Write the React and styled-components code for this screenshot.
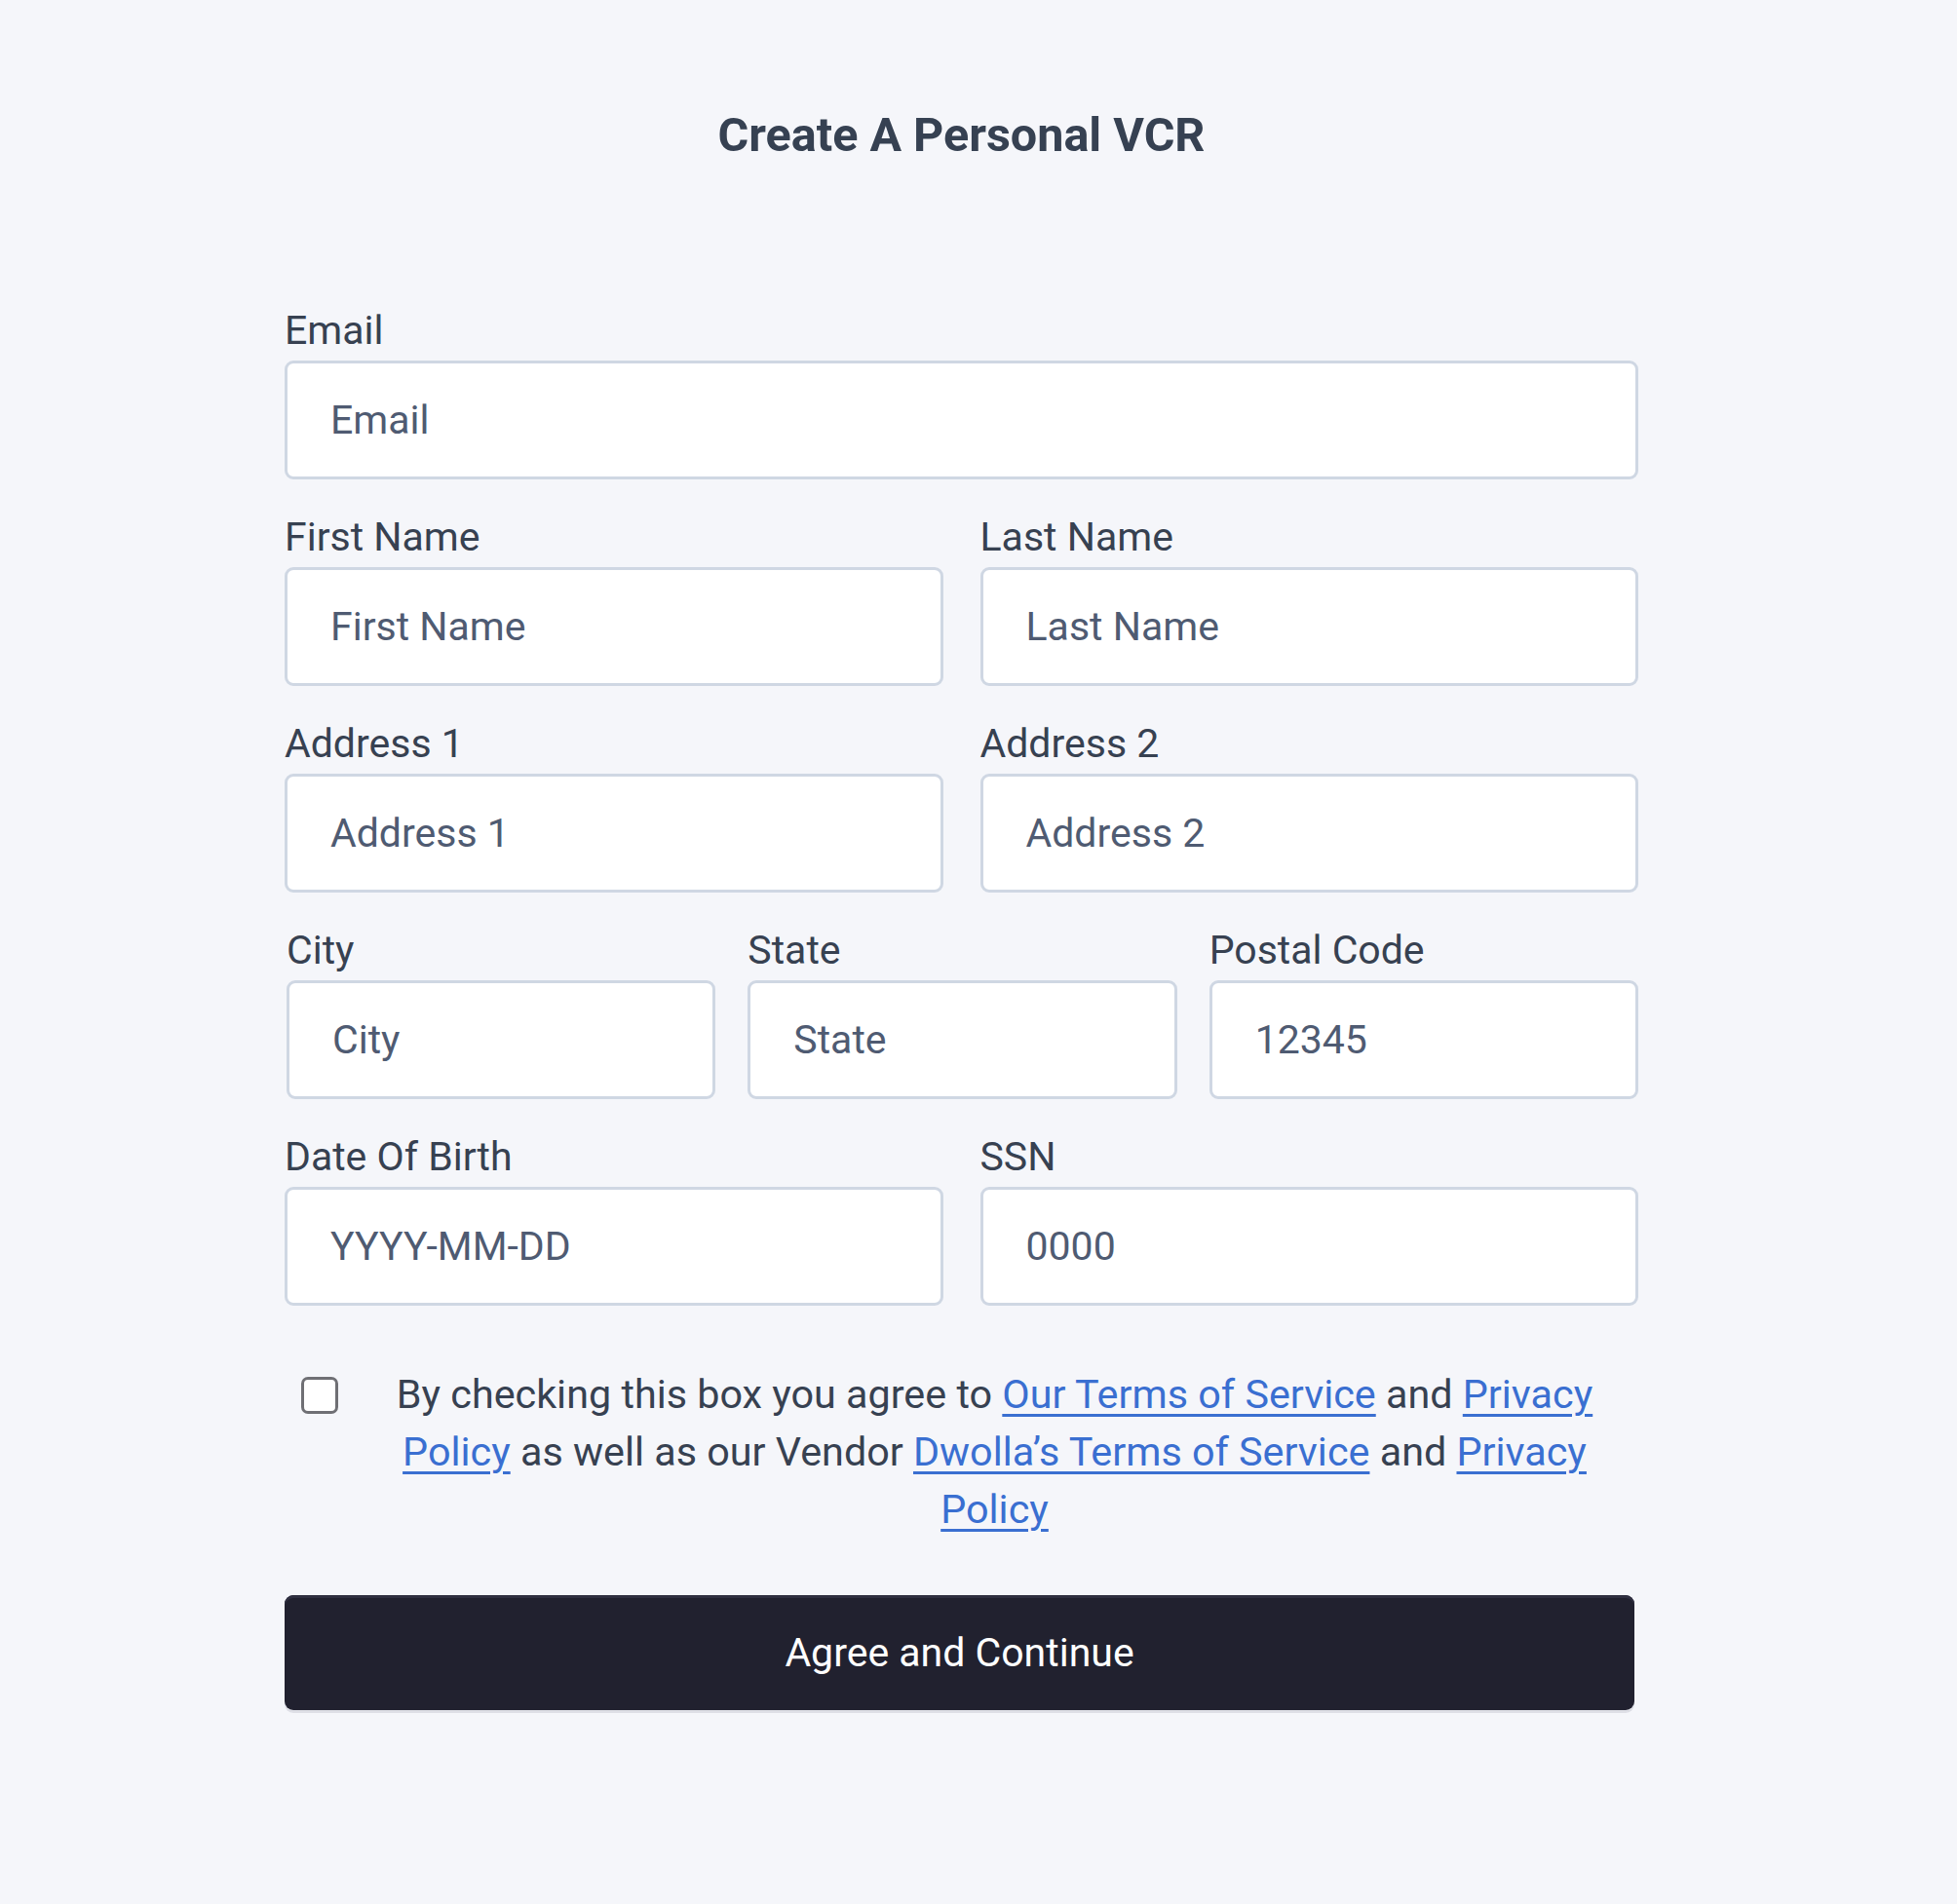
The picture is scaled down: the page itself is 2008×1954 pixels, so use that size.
import React from 'react'
import styled, { createGlobalStyle } from 'styled-components'

const GlobalStyle = createGlobalStyle`
    html, body {
        margin: 0;
        padding: 0;
        background: #f5f6fa;
    }

    body {
        font-family: Roboto, "Liberation Sans", Arial, sans-serif;
        color: #374151;
    }
`

const Page = styled.div`
    min-height: 1954px;
    padding: 0 35px 0 0;
    box-sizing: border-box;
    display: flex;
    flex-direction: column;
    align-items: center;
`

const Title = styled.h1`
    margin: 111px 0 0;
    font-size: 48.5px;
    line-height: 56px;
    font-weight: 700;
    color: #364152;
`

const Form = styled.form`
    width: 1389px;
    margin-top: 147px;
    display: flex;
    flex-direction: column;
`

const Row = styled.div`
    display: grid;
    grid-template-columns: repeat(${props => props.cols || 1}, 1fr);
    column-gap: ${props => props.gap || 38}px;
    padding-left: ${props => props.inset || 0}px;
`

const Field = styled.div`
    display: flex;
    flex-direction: column;
    margin-bottom: 34px;
`

const Label = styled.label`
    font-size: 41px;
    line-height: 50px;
    color: #374151;
    margin-bottom: 6px;
`

const Input = styled.input`
    box-sizing: border-box;
    height: 122px;
    width: 100%;
    padding: 0 44px;
    border: 3px solid #cfd7e3;
    border-radius: 9px;
    background: #fff;
    font-family: inherit;
    font-size: 41px;
    color: #2d3748;
    outline: none;

    &::placeholder {
        color: #4f5b72;
        opacity: 1;
    }
`

const Agreement = styled.div`
    display: flex;
    align-items: flex-start;
    margin-top: 28px;
`

const Box = styled.input`
    appearance: none;
    flex: 0 0 auto;
    width: 38px;
    height: 38px;
    margin: 11px 0 0 17px;
    border: 3px solid #6f6f74;
    border-radius: 7px;
    background: #fff;
    box-sizing: border-box;
`

const Terms = styled.p`
    margin: 0 38px 0 51px;
    flex: 1;
    text-align: center;
    font-size: 41.3px;
    line-height: 59px;
    color: #374151;
`

const TermsLink = styled.a`
    color: #3a6fd1;
    text-decoration: underline;
    text-underline-offset: 6px;
    text-decoration-thickness: 3px;
`

const Button = styled.button`
    margin-top: 58px;
    width: 1385px;
    height: 118px;
    border: none;
    border-radius: 9px;
    background: #21212f;
    box-shadow: inset 0 3px 0 #2f2f40, 0 3px 0 #dedfe6;
    color: #fff;
    font-family: inherit;
    font-size: 41px;
    cursor: pointer;
`

const TextField = ({ label, placeholder }) => (
    <Field>
        <Label>{ label }</Label>
        <Input placeholder={ placeholder } />
    </Field>
)

export default function App() {
    return (
        <Page>
            <GlobalStyle />
            <Title>Create A Personal VCR</Title>
            <Form onSubmit={ e => e.preventDefault() }>
                <TextField label="Email" placeholder="Email" />
                <Row cols={2}>
                    <TextField label="First Name" placeholder="First Name" />
                    <TextField label="Last Name" placeholder="Last Name" />
                </Row>
                <Row cols={2}>
                    <TextField label="Address 1" placeholder="Address 1" />
                    <TextField label="Address 2" placeholder="Address 2" />
                </Row>
                <Row cols={3} gap={33} inset={2}>
                    <TextField label="City" placeholder="City" />
                    <TextField label="State" placeholder="State" />
                    <TextField label="Postal Code" placeholder="12345" />
                </Row>
                <Row cols={2}>
                    <TextField label="Date Of Birth" placeholder="YYYY-MM-DD" />
                    <TextField label="SSN" placeholder="0000" />
                </Row>
                <Agreement>
                    <Box type="checkbox" />
                    <Terms>
                        By checking this box you agree to <TermsLink href="#">Our Terms of Service</TermsLink> and <TermsLink href="#">Privacy Policy</TermsLink> as well as our Vendor <TermsLink href="#">Dwolla’s Terms of Service</TermsLink> and <TermsLink href="#">Privacy Policy</TermsLink>
                    </Terms>
                </Agreement>
                <Button type="submit">Agree and Continue</Button>
            </Form>
        </Page>
    )
}
